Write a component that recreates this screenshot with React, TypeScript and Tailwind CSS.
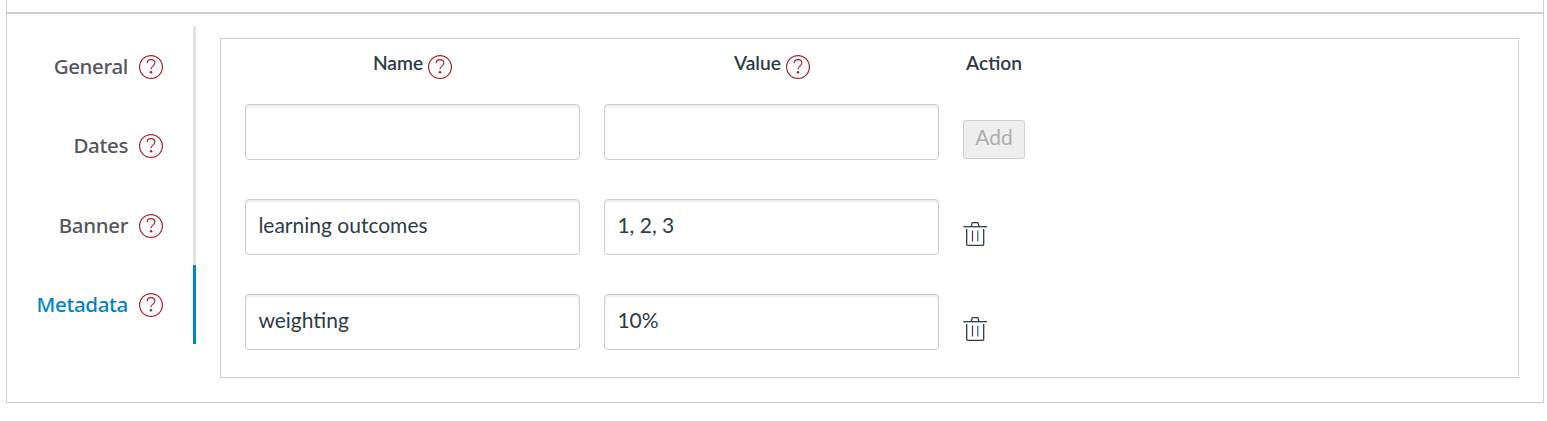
import React from "react";

const tabs = [
  { label: "General", active: false },
  { label: "Dates", active: false },
  { label: "Banner", active: false },
  { label: "Metadata", active: true },
];

const rows = [
  { name: "learning outcomes", value: "1, 2, 3" },
  { name: "weighting", value: "10%" },
];

function HelpIcon() {
  return (
    <svg width="24" height="24" viewBox="0 0 24 24" fill="none" stroke="#ab1f2e" className="shrink-0">
      <circle cx="12" cy="12" r="11.4" strokeWidth="1.2" />
      <path d="M8.2 8.2C8.2 6 9.8 4.6 12 4.6s3.9 1.4 3.9 3.5c0 3-3.9 3.1-3.9 6v.5" strokeWidth="1.1" />
      <circle cx="12" cy="17.2" r="1.25" fill="#ab1f2e" stroke="none" />
    </svg>
  );
}

function TrashIcon() {
  return (
    <svg width="24" height="24" viewBox="0 0 24 24" fill="none" stroke="#2d3b45">
      <path d="M0.3 4.7H24" strokeWidth="1.3" />
      <path d="M8.3 4.5 9 1.4Q9.2.7 9.9.7h4.4q.7 0 .9.7L16 4.5" strokeWidth="1.3" />
      <path d="M3.7 7v15.2q0 1.1 1.1 1.1h14.8q1.1 0 1.1-1.1V7" strokeWidth="1.3" />
      <path d="M9.5 8.5v11" strokeWidth="1.2" stroke="#5a2a52" />
      <path d="M14.8 8.5v11" strokeWidth="1.2" stroke="#2b5c8c" />
    </svg>
  );
}

function Field({ value }: { value: string }) {
  return (
    <input
      type="text"
      defaultValue={value}
      className="h-14 w-[335px] rounded-[4px] border border-[#c7cdd1] bg-white px-[12.4px] pb-[5px] text-[21px] text-[#2d3b45] shadow-[inset_0_2px_2px_rgba(0,0,0,0.07)] outline-none"
    />
  );
}

export default function App() {
  return (
    <div className="h-[421px] w-[1547px] overflow-hidden bg-white pl-[6px] font-['Lato',sans-serif] text-[#2d3b45]">
      <div className="flex h-[403px] w-[1538px] flex-col border-x border-b border-[#c7cdd1]">
        <div className="h-[14px] shrink-0 border-b-2 border-[#c7cdd1]" />
        <div className="flex flex-1 pt-3">
          <nav className="flex h-[318px] w-[189px] flex-col font-['Noto_Sans',sans-serif]">
            {tabs.map((tab) => (
              <div
                key={tab.label}
                className={
                  tab.active
                    ? "flex flex-1 items-center justify-end gap-[11px] border-r-3 border-[#0084c7] pr-[30px] pt-[2px] text-[20.5px] font-medium tracking-[-0.35px] text-[#0084c7]"
                    : "flex flex-1 items-center justify-end gap-[11px] border-r-3 border-[#e3e3e3] pr-[30px] pt-[2px] text-[20.5px] font-medium tracking-[-0.35px] text-[#55555f]"
                }
              >
                <span className="pb-px">{tab.label}</span>
                <HelpIcon />
              </div>
            ))}
          </nav>
          <section className="ml-6 mt-3 h-[340px] w-[1299px] border border-[#c7cdd1] pl-6">
            <div className="grid h-[65px] grid-cols-[335px_335px_62px] gap-x-6 text-[19.2px] font-semibold">
              <div className="flex items-start justify-center gap-[5px] pt-4">
                <span className="-mt-[4px] leading-6">Name</span>
                <HelpIcon />
              </div>
              <div className="flex items-start justify-center gap-[5px] pl-px pt-4">
                <span className="-mt-[4px] leading-6">Value</span>
                <HelpIcon />
              </div>
              <div className="pt-[12px] text-center leading-6">Action</div>
            </div>
            <div className="grid grid-cols-[335px_335px_62px] gap-x-6 gap-y-[39px]">
              <Field value="" />
              <Field value="" />
              <button
                disabled
                className="mt-4 h-[39px] w-[62px] rounded-[3px] border border-[#cfcfcf] bg-[#eeeeee] pb-[5px] text-[21px] leading-6 text-[#adadad]"
              >
                Add
              </button>
              {rows.map((row) => (
                <React.Fragment key={row.name}>
                  <Field value={row.name} />
                  <Field value={row.value} />
                  <button aria-label="Delete" className="mt-[23px] size-6">
                    <TrashIcon />
                  </button>
                </React.Fragment>
              ))}
            </div>
          </section>
        </div>
      </div>
    </div>
  );
}
